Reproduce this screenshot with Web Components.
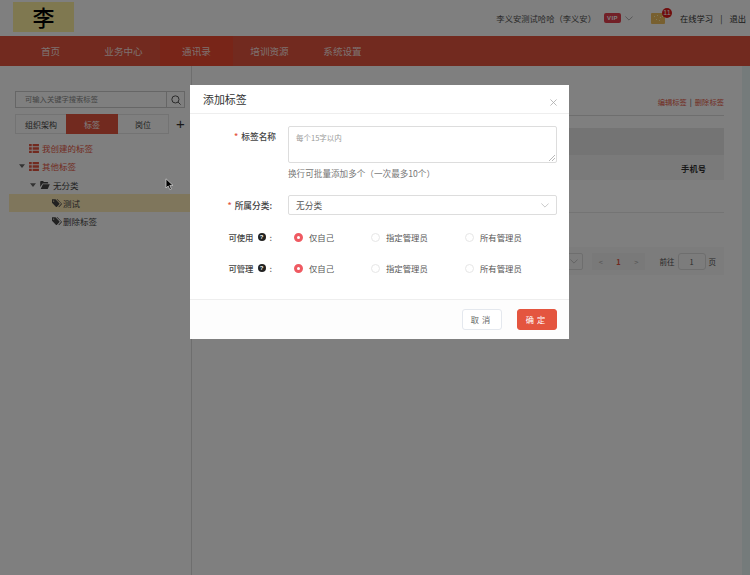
<!DOCTYPE html>
<html lang="zh">
<head>
<meta charset="utf-8">
<title>添加标签</title>
<style>
  html, body { margin: 0; height: 100%; overflow: hidden; }
  body { font-family: "Noto Sans CJK SC", "Liberation Sans", sans-serif; background: #fff; color: #333; }
  #app { display: flex; flex-direction: column; height: 575px; }
</style>
</head>
<body>
<div id="app">
  <app-header></app-header>
  <app-nav></app-nav>
  <app-content></app-content>
</div>
<modal-mask></modal-mask>
<add-tag-dialog></add-tag-dialog>
<mouse-arrow></mouse-arrow>

<script>
const ICONS = {
  list: '<svg viewBox="0 0 11 10" width="10" height="9"><path fill="currentColor" d="M0 0h3v2.600H0zM4 0h7v2.600H4zM0 3.700h3v2.600H0zM4 3.700h7v2.600H4zM0 7.400h3V10H0zM4 7.400h7V10H4z"/></svg>',
  folder: '<svg viewBox="0 0 12 10" width="10" height="8"><path fill="currentColor" d="M0 1.200C0 .5.4 0 1 0h2.600l1 1.200H9c.6 0 1 .4 1 1V3H3L0 7.500zM3.400 4H12L9.400 10H.6z"/></svg>',
  tags: '<svg viewBox="0 0 12 10" width="10" height="9"><path fill="currentColor" d="M0 0h4.200l4.600 4.600a1 1 0 0 1 0 1.400L6 8.900a1 1 0 0 1-1.400 0L0 4.200zM2 1.300a.8.8 0 1 0 0 1.600.8.8 0 0 0 0-1.600z"/><path fill="currentColor" d="M5.400 0h1.200l4.900 4.900a1 1 0 0 1 0 1.400L8.400 9.500l-.7-.7 2.800-2.900a.8.8 0 0 0 0-1.100z"/></svg>',
  caret: '<svg viewBox="0 0 8 5" width="6" height="4"><path fill="currentColor" d="M0 0h8L4 5z"/></svg>',
  chevron: '<svg viewBox="0 0 10 6" width="8" height="5"><path fill="none" stroke="currentColor" stroke-width="1" d="M.5.5 5 5 9.500.5"/></svg>',
  search: '<svg viewBox="0 0 12 12" width="10" height="10"><circle cx="5.300" cy="5.300" r="4.300" fill="none" stroke="currentColor" stroke-width="1.200"/><path stroke="currentColor" stroke-width="1.200" d="M8.500 8.500 11.500 11.500"/></svg>'
};

class AppHeader extends HTMLElement {
  constructor() {
    super();
    this.attachShadow({ mode: 'open' });
    this.shadowRoot.innerHTML = `
      <style>
        :host { display: flex; align-items: center; height: 36px; flex: none; padding: 0 4px 0 13px; background: #fff; font-size: 8.300px; color: #555; }
        .logo { width: 61px; height: 30px; background: #fff0a0; color: #000; font: 500 22px/29px "Noto Sans CJK SC", sans-serif; text-align: center; margin-top: -2px; }
        .user { margin-left: auto; white-space: nowrap; }
        .vip { margin-left: 8px; width: 17px; height: 10px; border-radius: 2px; background: #e5414f; color: #fff; font: 700 6px/10px "Liberation Sans", sans-serif; text-align: center; letter-spacing: .4px; }
        .chev { display: flex; margin-left: 4px; color: #999; }
        .mail { position: relative; display: flex; margin-left: 18px; margin-right: 15px; }
        .mail i { position: absolute; left: 11px; top: -5px; width: 10px; height: 10px; border-radius: 50%; background: #e01b1b; color: #fff; font: 7px/10px "Liberation Sans", sans-serif; text-align: center; }
        .link { color: #333; white-space: nowrap; }
        .sep { margin: 0 7px; color: #333; }
      </style>
      <div class="logo">李</div>
      <span class="user">李义安测试哈哈（李义安）</span>
      <div class="vip">VIP</div>
      <span class="chev">${ICONS.chevron}</span>
      <span class="mail">
        <svg viewBox="0 0 14 11" width="14" height="11"><rect width="14" height="11" rx="1" fill="#f0c060"/><path fill="#fff3b0" d="M3 3h1v1H3zM6 2h1v1H6zM9 4h1v1H9zM5 6h1v1H5zM8 7h1v1H8zM11 3h1v1h-1z"/></svg>
        <i>11</i>
      </span>
      <span class="link">在线学习</span><span class="sep">|</span><span class="link">退出</span>
    `;
  }
}

class AppNav extends HTMLElement {
  constructor() {
    super();
    this.attachShadow({ mode: 'open' });
    const items = ['首页', '业务中心', '通讯录', '培训资源', '系统设置'];
    this.shadowRoot.innerHTML = `
      <style>
        :host { display: flex; height: 30px; flex: none; padding-left: 14px; background: #e4553f; }
        a { width: 73px; line-height: 30px; text-align: center; color: rgba(255,255,255,.85); font-size: 9.600px; }
        a.on { background: #f04a30; }
      </style>
      ${items.map((t, i) => `<a class="${i === 2 ? 'on' : ''}">${t}</a>`).join('')}
    `;
  }
}

class AppContent extends HTMLElement {
  constructor() {
    super();
    this.attachShadow({ mode: 'open' });
    this.shadowRoot.innerHTML = `
      <style>
        :host { display: flex; flex: 1; min-height: 0; background: #fff; }
        .strip { width: 8px; flex: none; background: #eaf6f6; }
      </style>
      <tag-sidebar></tag-sidebar>
      <tag-panel></tag-panel>
      <div class="strip"></div>
    `;
  }
}

class TagSidebar extends HTMLElement {
  constructor() {
    super();
    this.attachShadow({ mode: 'open' });
    this.shadowRoot.innerHTML = `
      <style>
        :host { display: block; width: 183px; flex: none; margin-left: 9px; padding-top: 25px; box-sizing: border-box; border-right: 1px solid #ddd; font-size: 8.500px; color: #444; }
        .search { display: flex; height: 17px; margin: 0 6px; border: 1px solid #ccc; box-sizing: border-box; }
        .search span { flex: 1; padding-left: 9px; font-size: 7.300px; line-height: 15px; color: #888; }
        .search b { display: flex; align-items: center; justify-content: center; width: 17px; border-left: 1px solid #ccc; color: #555; }
        .tabs { display: flex; align-items: center; margin: 6px 0 0 6px; }
        .tabs div { width: 51px; height: 20px; line-height: 20px; text-align: center; font-size: 8px; border: solid #e6e6e6; border-width: 1px 0; box-sizing: border-box; }
        .tabs div:first-child { border-left-width: 1px; }
        .tabs div.on { background: #e4553f; border-color: #e4553f; color: #fff; width: 52px; }
        .tabs div:nth-child(3) { border-right-width: 1px; }
        .tabs em { font: 300 15px/20px "Liberation Sans", sans-serif; margin-left: 7px; color: #333; }
        .tree { margin-top: 5px; }
        .row { display: flex; align-items: center; height: 18.300px; white-space: nowrap; }
        .red { color: #e4553f; }
        .row .c { display: flex; width: 10px; color: #666; }
        .row .i { display: flex; margin-right: 3px; }
        .row.l1 { padding-left: 20px; }
        .row.l2 { padding-left: 10px; }
        .row.l2b { padding-left: 21px; }
        .row.l3 { padding-left: 43px; }
        .row.l3 .i { margin-right: 1px; }
        .on-row { background: #ffecb8; }
      </style>
      <div class="search"><span>可输入关键字搜索标签</span><b>${ICONS.search}</b></div>
      <div class="tabs"><div>组织架构</div><div class="on">标签</div><div>岗位</div><em>+</em></div>
      <div class="tree">
        <div class="row red l1"><span class="i">${ICONS.list}</span>我创建的标签</div>
        <div class="row red l2"><span class="c">${ICONS.caret}</span><span class="i">${ICONS.list}</span>其他标签</div>
        <div class="row l2b"><span class="c">${ICONS.caret}</span><span class="i">${ICONS.folder}</span>无分类</div>
        <div class="row l3 on-row"><span class="i">${ICONS.tags}</span>测试</div>
        <div class="row l3"><span class="i">${ICONS.tags}</span>删除标签</div>
      </div>
    `;
  }
}

class TagPanel extends HTMLElement {
  constructor() {
    super();
    this.attachShadow({ mode: 'open' });
    this.shadowRoot.innerHTML = `
      <style>
        :host { display: flex; flex-direction: column; flex: 1; min-width: 0; padding: 18px 18px 0 0; font-size: 8.300px; color: #333; }
        .top { display: flex; justify-content: flex-end; align-items: center; height: 32px; box-sizing: border-box; padding-top: 5px; border-bottom: 1px solid #ddd; color: #e4553f; font-size: 7.300px; gap: 3px; }
        .top i { font-style: normal; color: #333; }
        .band { height: 27px; margin-top: 12px; background: #e8e8e8; }
        .head { display: flex; justify-content: flex-end; align-items: center; height: 25px; background: #f5f5f5; padding-right: 18px; font-weight: 700; }
        .rule { height: 32px; border-bottom: 1px solid #e8e8e8; }
        .pager { display: flex; align-items: center; justify-content: flex-end; height: 28px; margin-top: 34px; background: #f8f8f8; padding-right: 8px; color: #555; font-size: 7.500px; }
        .sel { display: flex; align-items: center; justify-content: flex-end; width: 40px; height: 17px; padding-right: 4px; box-sizing: border-box; border: 1px solid #ddd; border-radius: 2px; color: #bbb; margin-right: 9px; }
        .pg { display: flex; justify-content: space-around; align-items: center; width: 53px; height: 17px; background: #f2f2f2; color: #aaa; margin-right: 14.500px; }
        .pg b { color: #e4553f; }
        .go { width: 28px; height: 17px; line-height: 15px; text-align: center; box-sizing: border-box; border: 1px solid #ddd; border-radius: 3px; margin: 0 3px; }
      </style>
      <div class="top"><span>编辑标签</span><i>|</i><span>删除标签</span></div>
      <div class="band"></div>
      <div class="head">手机号</div>
      <div class="rule"></div>
      <div class="pager">
        <div class="sel">${ICONS.chevron}</div>
        <div class="pg"><span>&lt;</span><b>1</b><span>&gt;</span></div>
        <span>前往</span><div class="go">1</div><span>页</span>
      </div>
    `;
  }
}

class ModalMask extends HTMLElement {
  constructor() {
    super();
    this.attachShadow({ mode: 'open' });
    this.shadowRoot.innerHTML = `<style>:host { position: fixed; inset: 0; background: rgba(0,0,0,.5); }</style>`;
  }
}

class RadioRow extends HTMLElement {
  constructor() {
    super();
    this.attachShadow({ mode: 'open' });
    this.shadowRoot.innerHTML = `
      <style>
        :host { display: flex; align-items: center; height: 31px; font-size: 8.400px; color: #555; }
        .lab { width: 82px; display: flex; align-items: center; justify-content: flex-end; margin-right: 21.500px; padding-bottom: 4px; color: #444; font-weight: 500; }
        .q { width: 8px; height: 8px; margin: 0 4px; border-radius: 50%; background: #222; color: #fff; font: 700 6px/8px "Liberation Sans", sans-serif; text-align: center; }
        .opt { display: flex; align-items: center; gap: 6.500px; padding-bottom: 2px; }
        .opt:nth-of-type(2) { width: 77px; }
        .opt:nth-of-type(3) { width: 94px; }
        .t { margin-bottom: 2px; }
        .dot { width: 9px; height: 9px; box-sizing: border-box; border-radius: 50%; border: 1px solid #e6e6e6; flex: none; }
        .dot.on { border: 3px solid #ef5a62; background: #fff; }
      </style>
      <div class="lab">${this.getAttribute('label')}<span class="q">?</span>:</div>
      <div class="opt"><span class="dot on"></span><span class="t">仅自己</span></div>
      <div class="opt"><span class="dot"></span><span class="t">指定管理员</span></div>
      <div class="opt"><span class="dot"></span><span class="t">所有管理员</span></div>
    `;
  }
}

class AddTagDialog extends HTMLElement {
  constructor() {
    super();
    this.attachShadow({ mode: 'open' });
    this.shadowRoot.innerHTML = `
      <style>
        :host { position: fixed; left: 190px; top: 85px; width: 379px; height: 254px; display: flex; flex-direction: column; background: #fff; color: #444; font-size: 8.700px; }
        header { display: flex; justify-content: space-between; height: 29px; box-sizing: border-box; padding: 0 13px; border-bottom: 1px solid #eee; font-size: 10.900px; line-height: 28px; color: #333; }
        header svg { margin: 14px -1px 0 0; }
        main { flex: 1; }
        .r { display: flex; }
        .lab { width: 86px; text-align: right; color: #444; font-weight: 500; white-space: nowrap; }
        .lab.name { padding-top: 4px; }
        .lab.cat { width: 82px; line-height: 21px; }
        .lab s { text-decoration: none; color: #e4553f; margin-right: 3px; }
        .area { width: 269px; height: 37px; box-sizing: border-box; margin-left: 12px; padding: 5px 7px; border: 1px solid #ddd; border-radius: 2px; font-size: 7.500px; color: #999; position: relative; }
        .area svg { position: absolute; right: 1px; bottom: 1px; }
        .hint { margin: 3px 0 0 98px; color: #777; height: 14px; line-height: 14px; font-size: 8.600px; }
        .sel { display: flex; align-items: center; justify-content: space-between; width: 269px; height: 20px; box-sizing: border-box; margin-left: 16px; padding: 0 7px; border: 1px solid #ddd; border-radius: 2px; color: #555; }
        .sel span:last-child { display: flex; color: #bbb; }
        footer { display: flex; justify-content: flex-end; align-items: center; gap: 15px; height: 40px; padding-right: 12px; box-sizing: border-box; border-top: 1px solid #eee; background: #fdfdfd; }
        .btn { width: 40px; height: 21px; box-sizing: border-box; border-radius: 3px; text-align: center; line-height: 19px; letter-spacing: 3px; font-size: 8.200px; border: 1px solid #e4e8ee; color: #666; background: #fff; }
        .btn.ok { background: #e4553f; border-color: #e4553f; color: #fff; }
      </style>
      <header>
        <span>添加标签</span>
        <svg viewBox="0 0 8 8" width="7" height="7"><path stroke="#aaa" stroke-width=".9" d="M.5.5 7.500 7.500M7.500.5.5 7.500"/></svg>
      </header>
      <main>
        <div class="r" style="margin-top:12px"><span class="lab name"><s>*</s>标签名称</span><div class="area">每个15字以内<svg viewBox="0 0 6 6" width="6" height="6"><path stroke="#888" stroke-width=".6" d="M0 6 6 0M3 6 6 3"/></svg></div></div>
        <div class="hint">换行可批量添加多个（一次最多10个）</div>
        <div class="r" style="margin-top:15px"><span class="lab cat"><s>*</s>所属分类:</span><div class="sel"><span>无分类</span><span>${ICONS.chevron}</span></div></div>
        <radio-row label="可使用" style="margin-top:7px"></radio-row>
        <radio-row label="可管理"></radio-row>
      </main>
      <footer><div class="btn">取消</div><div class="btn ok">确定</div></footer>
    `;
  }
}

class MouseArrow extends HTMLElement {
  constructor() {
    super();
    this.attachShadow({ mode: 'open' });
    this.shadowRoot.innerHTML = `
      <style>:host { position: fixed; left: 165px; top: 172px; display: block; width: 9px; height: 13px; }</style>
      <svg viewBox="0 0 9 13" width="9" height="13"><path fill="#000" stroke="#ccc" stroke-width=".8" d="M1 .8V10l2.200-2 1.600 3.600 1.600-.7-1.600-3.500H8z"/></svg>
    `;
  }
}

customElements.define('app-header', AppHeader);
customElements.define('app-nav', AppNav);
customElements.define('app-content', AppContent);
customElements.define('tag-sidebar', TagSidebar);
customElements.define('tag-panel', TagPanel);
customElements.define('modal-mask', ModalMask);
customElements.define('radio-row', RadioRow);
customElements.define('add-tag-dialog', AddTagDialog);
customElements.define('mouse-arrow', MouseArrow);
</script>
</body>
</html>
